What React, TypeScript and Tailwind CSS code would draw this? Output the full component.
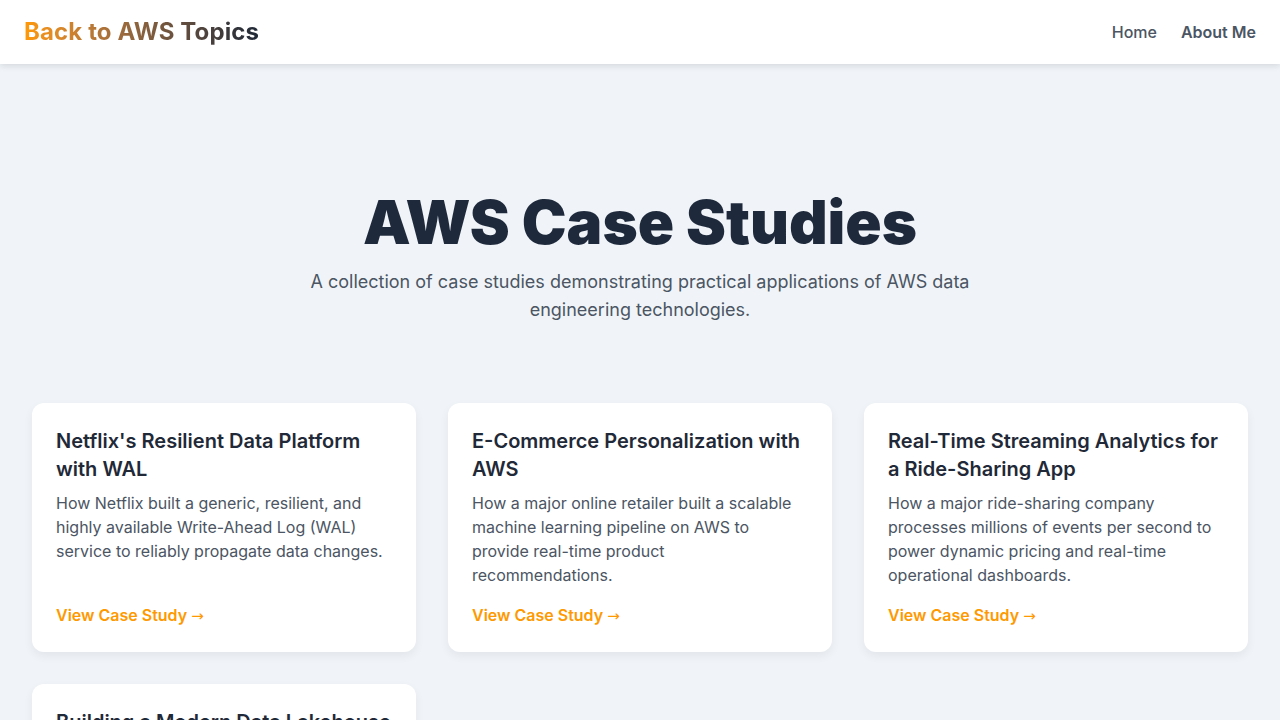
import React from "react";

interface CaseStudy {
  title: string;
  description: string;
}

const studies: CaseStudy[] = [
  {
    title: "Netflix's Resilient Data Platform with WAL",
    description:
      "How Netflix built a generic, resilient, and highly available Write-Ahead Log (WAL) service to reliably propagate data changes.",
  },
  {
    title: "E-Commerce Personalization with AWS",
    description:
      "How a major online retailer built a scalable machine learning pipeline on AWS to provide real-time product recommendations.",
  },
  {
    title: "Real-Time Streaming Analytics for a Ride-Sharing App",
    description:
      "How a major ride-sharing company processes millions of events per second to power dynamic pricing and real-time operational dashboards.",
  },
  {
    title: "Building a Modern Data Lakehouse on AWS",
    description:
      "How a financial services firm unified its data warehouse and data lake to serve analytics and machine learning at scale.",
  },
];

const CaseCard = ({ title, description }: CaseStudy) => (
  <div className="flex flex-col rounded-xl bg-white p-6 shadow-[0_4px_10px_rgba(15,23,42,0.06)]">
    <h2 className="text-xl font-semibold leading-7 text-[#1f2937]">{title}</h2>
    <p className="mt-2 text-base leading-6 text-[#4b5563]">{description}</p>
    <a href="#" className="mt-auto pt-4 text-base font-semibold leading-6 text-[#ff9900]">
      View Case Study{" "}
      <span className="font-[DejaVu_Sans] text-[15px] font-normal">→</span>
    </a>
  </div>
);

export default function App() {
  return (
    <div
      className="min-h-screen bg-[#f0f4f8]"
      style={{ fontFamily: "Inter, 'Noto Sans', sans-serif" }}
    >
      <header className="flex h-16 items-center justify-between bg-white px-6 shadow-[0_2px_6px_rgba(15,23,42,0.12)]">
        <a
          href="#"
          className="inline-block bg-gradient-to-r from-[#ff9900] to-[#1f2937] bg-clip-text text-2xl font-bold tracking-[0.005em] text-transparent"
        >
          Back to AWS Topics
        </a>
        <nav className="flex items-center gap-6 text-base font-medium text-[#4b5563]">
          <a href="#">Home</a>
          <a href="#" className="font-semibold">About Me</a>
        </nav>
      </header>

      <main className="px-8">
        <section className="flex flex-col items-center pt-32 pb-[79px] text-center">
          <h1 className="text-6xl font-black leading-none text-[#1e293b]">
            AWS Case Studies
          </h1>
          <p className="mt-4 max-w-2xl text-lg leading-7 text-[#4b5563]">
            A collection of case studies demonstrating practical applications of AWS data
            engineering technologies.
          </p>
        </section>

        <div className="grid grid-cols-3 gap-8 pb-8">
          {studies.map((s) => (
            <CaseCard key={s.title} {...s} />
          ))}
        </div>
      </main>
    </div>
  );
}
